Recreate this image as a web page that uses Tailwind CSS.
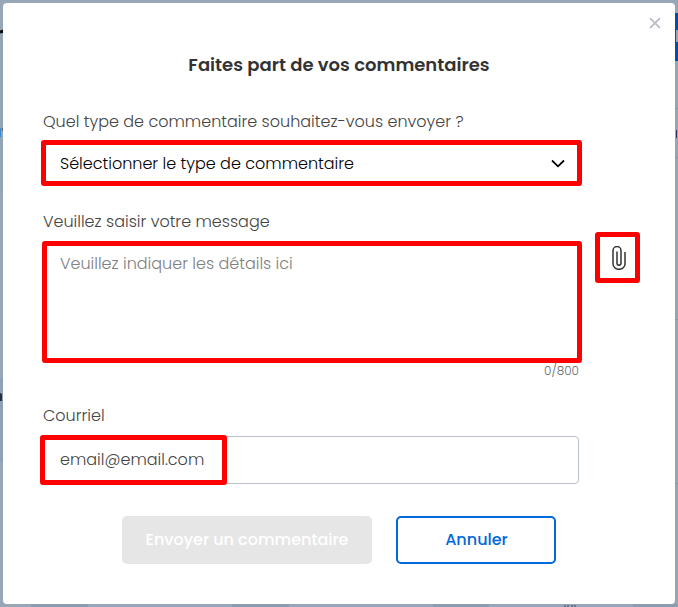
<!DOCTYPE html>
<html lang="fr">
<head>
  <meta charset="UTF-8">
  <meta name="viewport" content="width=device-width, initial-scale=1.0">
  <title>Faites part de vos commentaires</title>
  <script src="https://cdn.jsdelivr.net/npm/@tailwindcss/browser@4"></script>
</head>
<body class="relative h-[607px] overflow-hidden bg-[#98a7b8] p-[3px] font-[Poppins,Inter,sans-serif] text-base font-light text-[#444]">
  <!-- page behind the dialog -->
  <div class="absolute inset-0 overflow-hidden" aria-hidden="true">
    <div class="absolute left-0 top-[27px] h-[163px] w-[3px] bg-[#94a5b6]"></div>
    <div class="absolute left-0 top-[30px] h-[3px] w-[4px] -rotate-12 bg-black"></div>
    <div class="absolute left-0 top-[128px] h-[9px] w-px bg-[#3b86cc]"></div>
    <div class="absolute left-[2px] top-[128px] h-[3px] w-px bg-[#6d5a50]"></div>
    <div class="absolute left-0 top-[378px] h-[84px] w-[3px] bg-[#8fa1b4]"></div>
    <div class="absolute left-0 top-[393px] h-[8px] w-[2px] rounded-tr bg-[#26303d]"></div>
    <div class="absolute right-0 top-[13px] h-[48px] w-[4px] bg-[#004fa8]"></div>
    <div class="absolute right-0 top-[30px] h-[12px] w-[2px] bg-[#98a7b8]"></div>
    <div class="absolute right-0 top-[61px] h-[546px] w-[3px] bg-[#94a5b6]"></div>
    <div class="absolute right-0 top-[108px] h-px w-[3px] bg-[#8596a9]"></div>
    <div class="absolute right-[1px] top-[130px] h-[8px] w-px bg-[#3a2f6b]"></div>
    <div class="absolute right-0 top-[157px] h-px w-[3px] bg-[#8596a9]"></div>
    <div class="absolute right-0 top-[319px] h-px w-[3px] bg-[#8596a9]"></div>
    <div class="absolute right-0 top-[483px] h-px w-[3px] bg-[#8596a9]"></div>
    <div class="absolute bottom-0 left-[31px] h-[3px] w-[57px] bg-[#8b9caf]"></div>
    <div class="absolute bottom-0 left-[232px] h-[3px] w-[57px] bg-[#8b9caf]"></div>
    <div class="absolute bottom-0 left-[433px] h-[3px] w-[56px] bg-[#8b9caf]"></div>
    <div class="absolute bottom-0 left-[633px] h-[3px] w-[45px] bg-[#8b9caf]"></div>
    <div class="absolute bottom-0 left-[564px] h-[2px] w-[12px] border-t-2 border-dotted border-[#687889]"></div>
  </div>

  <div role="dialog" aria-labelledby="dialog-title" class="relative h-[601px] rounded-[4px] bg-white px-10 pt-[50px]">
    <button type="button" aria-label="Fermer" class="absolute right-[14px] top-[14px] text-[#b9bfcb]">
      <svg class="block size-3" viewBox="0 0 12 12" fill="none" stroke="currentColor" stroke-width="1.8"><path d="M1 1.2 11 11M11 1.2 1 11"/></svg>
    </button>

    <h1 id="dialog-title" class="text-center text-lg leading-6 font-semibold text-[#333]">Faites part de vos commentaires</h1>

    <form class="mt-[33px]">
      <label class="block h-6 leading-6">Quel type de commentaire souhaitez-vous envoyer ?</label>
      <button type="button" class="mt-[6px] -ml-[2px] flex h-[46px] w-[541px] items-center justify-between rounded-[3px] border-[5px] border-[#f00] pl-[14px] pr-3 text-black">
        <span class="pt-[2px]">Sélectionner le type de commentaire</span>
        <svg class="h-[9px] w-[14px]" viewBox="0 0 14 9" fill="none" stroke="currentColor" stroke-width="1.8"><path d="M1 1.5 7 7.3 13 1.5"/></svg>
      </button>

      <label for="message" class="mt-6 block h-6 leading-6">Veuillez saisir votre message</label>
      <div class="-ml-px flex items-start gap-[13px]">
        <div class="mt-[7px] shrink-0">
          <textarea id="message" placeholder="Veuillez indiquer les détails ici" class="block h-[122px] w-[540px] resize-none rounded-[3px] border-[5px] border-[#f00] px-[13px] pt-[6px] leading-6 placeholder:text-[#808080]"></textarea>
          <p class="mr-[3px] h-4 text-right text-xs leading-4 text-[#666]">0/800</p>
        </div>
        <button type="button" aria-label="Joindre un fichier" class="-mt-[2px] flex h-[51px] w-[45px] shrink-0 items-center justify-center rounded-[3px] border-[5px] border-[#f00] pl-[3px]">
          <svg class="h-6 w-[14px]" viewBox="0 0 14 24" fill="none" stroke="#333" stroke-width="1.5"><path d="M13 6V18a6 5.3 0 0 1-12 0V4.5a4 4 0 0 1 8 0V17a2 2.2 0 0 1-4 0V5.5"/></svg>
        </button>
      </div>

      <label for="email" class="mt-[25px] block h-6 leading-6">Courriel</label>
      <div class="relative mt-2 h-12 w-[536px]">
        <input id="email" type="text" value="email@email.com" class="block h-full w-full rounded-[4px] border border-[#b9bfcb] px-4 pb-px">
        <div class="pointer-events-none absolute -left-[3px] -top-px h-[50px] w-[187px] rounded-[3px] border-[5px] border-[#f00]"></div>
      </div>

      <div class="mt-8 ml-[79px] flex gap-6 font-medium">
        <button type="button" disabled class="h-12 w-[250px] rounded-[5px] bg-[#e6e6e6] pb-px text-white">Envoyer un commentaire</button>
        <button type="button" class="h-12 w-40 rounded-[5px] border-2 border-[#0068dd] pb-px pl-px text-[#0068dd]">Annuler</button>
      </div>
    </form>
  </div>
</body>
</html>
